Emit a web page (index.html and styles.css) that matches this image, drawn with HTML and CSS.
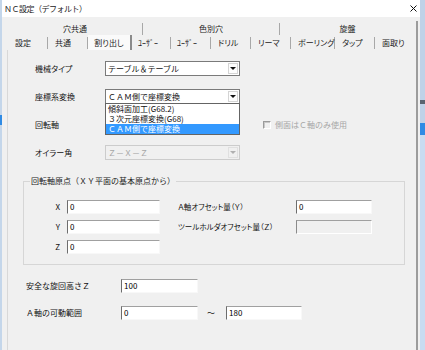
FILE: index.html
```html
<!DOCTYPE html>
<html lang="ja">
<head>
  <meta charset="UTF-8">
  <meta name="viewport" content="width=device-width, initial-scale=1.0">
  <title>ＮＣ設定（デフォルト）</title>
  <link rel="stylesheet" href="styles.css">
</head>
<body>
  <div class="screen">
    <div class="edge edgeLeft"></div>
    <div class="dialog">
      <div class="titlebar">
        <span class="title">ＮＣ設定（デフォルト）</span>
        <svg class="closeIcon" width="7" height="7" viewBox="0 0 7 7">
          <path d="M0.5 0.5L6.5 6.5M6.5 0.5L0.5 6.5" stroke="#111" stroke-width="1" fill="none"/>
        </svg>
      </div>
      <div class="client">
        <div class="tabControl">
          <div class="tabRow upperRow">
            <div class="tab group1">穴共通</div>
            <div class="tab group2">色別穴</div>
            <div class="tab group3 last">旋盤</div>
          </div>
          <div class="tabRow lowerRow">
            <div class="tab w40">設定</div>
            <div class="tab w40">共通</div>
            <div class="tab w44 selected">割り出し</div>
            <div class="tab w39 half">ﾕｰｻﾞｰ</div>
            <div class="tab w40 half">ﾕｰｻﾞｰ</div>
            <div class="tab w40">ドリル</div>
            <div class="tab w40">リーマ</div>
            <div class="tab w44">ボーリング</div>
            <div class="tab w40">タップ</div>
            <div class="tab w40 last">面取り</div>
          </div>

          <div class="panel">
            <div class="fields">
              <div class="row">
                <span class="label">機械タイプ</span>
                <div class="combo">
                  <span class="comboText">テーブル＆テーブル</span>
                  <span class="dropButton"><i class="arrow"></i></span>
                </div>
              </div>
              <div class="row">
                <span class="label">座標系変換</span>
                <div class="combo open">
                  <span class="comboText">ＣＡＭ側で座標変換</span>
                  <span class="dropButton"><i class="arrow"></i></span>
                  <ul class="dropList">
                    <li>傾斜面加工(G68.2)</li>
                    <li>３次元座標変換(G68)</li>
                    <li class="highlight">ＣＡＭ側で座標変換</li>
                  </ul>
                </div>
              </div>
              <div class="row">
                <span class="label">回転軸</span>
                <div class="combo">
                  <span class="comboText"></span>
                  <span class="dropButton"><i class="arrow"></i></span>
                </div>
                <label class="check disabled">
                  <span class="checkBox"></span>
                  <span>側面はＣ軸のみ使用</span>
                </label>
              </div>
              <div class="row">
                <span class="label">オイラー角</span>
                <div class="combo disabled">
                  <span class="comboText">Ｚ－Ｘ－Ｚ</span>
                  <span class="dropButton"><i class="arrow"></i></span>
                </div>
              </div>
            </div>

            <fieldset class="groupBox">
              <legend>回転軸原点（ＸＹ平面の基本原点から）</legend>
              <div class="originGrid">
                <span class="axis">X</span>
                <div class="edit w93">0</div>
                <span class="label2">Ａ軸オフセット量（Ｙ）</span>
                <div class="edit w76">0</div>

                <span class="axis">Y</span>
                <div class="edit w93">0</div>
                <span class="label2">ツールホルダオフセット量（Ｚ）</span>
                <div class="edit w76 disabled"></div>

                <span class="axis">Z</span>
                <div class="edit w93">0</div>
              </div>
            </fieldset>

            <div class="extraGrid">
              <span class="label">安全な旋回高さＺ</span>
              <div class="edit w77">100</div>
              <span></span>
              <span></span>

              <span class="label">Ａ軸の可動範囲</span>
              <div class="edit w77">0</div>
              <span class="tilde">～</span>
              <div class="edit w76">180</div>
            </div>
          </div>
        </div>
      </div>
    </div>
    <div class="edge edgeRight"></div>
  </div>
</body>
</html>
```

FILE: styles.css
```css
* {
  box-sizing: border-box;
}

html,
body {
  margin: 0;
  padding: 0;
}

body {
  font-family: "Noto Sans CJK JP", "Noto Sans", sans-serif;
  font-size: 8px;
  line-height: 10px;
  color: #111;
  background-color: #c8d9ec;
  overflow: hidden;
}

.screen {
  display: flex;
  width: 425px;
  height: 350px;
}

.edge {
  flex: none;
}

.edgeLeft {
  width: 2px;
  background: linear-gradient(#c4d6ea 0 115px, #2f8be4 115px 125px, #c4d6ea 125px);
}

.edgeRight {
  width: 5px;
  background: linear-gradient(#bfd2e8 0 100px, #5a6470 100px 104px, #bfd2e8 104px 123px, #2f8be4 123px 135px, #c8dcf1 135px);
}

.dialog {
  flex: 1;
  display: flex;
  flex-direction: column;
  background-color: #f0f0f0;
}

.titlebar {
  height: 17px;
  display: flex;
  align-items: center;
  justify-content: space-between;
  padding: 0 3px 0 2px;
  background-color: #fff;
}

.title {
  font-size: 8px;
  letter-spacing: -0.5px;
  color: #222;
}

.closeIcon {
  display: block;
}

.client {
  flex: 1;
  padding: 4px 0 0 5px;
}

/* tabs */

.tabControl {
  width: 411px;
  height: 100%;
  display: flex;
  flex-direction: column;
  border-right: 2px solid #9c9c9c;
}

.tabRow {
  display: flex;
  padding-left: 1px;
}

.upperRow {
  height: 15px;
}

.lowerRow {
  height: 14px;
}

.tab {
  border-right: 1px solid #a8a8a8;
  white-space: nowrap;
  color: #222;
  font-feature-settings: "palt";
}

.upperRow .tab {
  margin: 2px 0 1px;
  line-height: 12px;
  text-align: center;
}

.lowerRow .tab {
  margin: 1px 0 1px;
  line-height: 12px;
  padding-left: 7px;
}

.tab.last {
  border-right: none;
}

.group1 { width: 135px; }
.group2 { width: 137px; }
.group3 { width: 135px; }

.w39 { width: 39px; }
.w40 { width: 40px; }
.w44 { width: 44px; }

.lowerRow .tab.selected {
  margin: -1px 0 0;
  line-height: 15px;
  padding-left: 0;
  text-align: center;
  background-color: #fafafa;
  border-right: 2px solid #8a8a8a;
}

.lowerRow .tab.half {
  padding-left: 6px;
}

/* panel */

.panel {
  flex: 1;
  border-left: 1px solid #d8d8d8;
}

.fields {
  display: flex;
  flex-direction: column;
  gap: 13px;
  padding: 11px 0 0 27px;
}

.row {
  display: flex;
  align-items: center;
  height: 15px;
}

.row .label {
  width: 70px;
  font-feature-settings: "palt";
}

.combo {
  position: relative;
  width: 135px;
  height: 15px;
  display: flex;
  align-items: center;
  justify-content: space-between;
  border: 1px solid #7a7a7a;
  background-color: #fff;
}

.comboText {
  padding-left: 2px;
  white-space: nowrap;
}

.dropButton {
  width: 10px;
  height: 11px;
  margin-right: 1px;
  display: flex;
  align-items: center;
  justify-content: center;
  border: 1px solid #d4d4d4;
  background-color: #fdfdfd;
}

.arrow {
  width: 0;
  height: 0;
  border-left: 3px solid transparent;
  border-right: 3px solid transparent;
  border-top: 3px solid #111;
}

.combo.disabled {
  border-color: #cccccc;
  background-color: #f0f0f0;
  color: #a6a6a6;
}

.combo.disabled .dropButton {
  border-color: #e0e0e0;
  background-color: #f0f0f0;
}

.combo.disabled .arrow {
  border-top-color: #b0b0b0;
}

.dropList {
  position: absolute;
  top: 100%;
  left: -1px;
  width: 135px;
  margin: 0;
  padding: 0;
  list-style: none;
  border: 1px solid #646464;
  background-color: #fff;
  z-index: 2;
}

.dropList li {
  height: 10px;
  line-height: 10px;
  padding-left: 2px;
  white-space: nowrap;
}

.dropList li.highlight {
  background-color: #3399ff;
  color: #fff;
}

.check {
  display: flex;
  align-items: center;
  margin-left: 23px;
  gap: 4px;
}

.check.disabled {
  color: #a6a6a6;
}

.checkBox {
  width: 8px;
  height: 8px;
  border: 1px solid;
  border-color: #9a9a9a #ffffff #ffffff #9a9a9a;
  box-shadow: inset 1px 1px 0 #c8c8c8;
  background-color: #f0f0f0;
}

/* group box */

.groupBox {
  width: 382px;
  margin: 16px 0 0 15px;
  padding: 0 0 10px 6px;
  border: 1px solid #d6d6d6;
  min-width: 0;
}

.groupBox legend {
  padding: 0 1px;
  line-height: 10px;
  color: #222;
}

.originGrid {
  display: grid;
  grid-template-columns: 37px 93px 136px 76px;
  grid-auto-rows: 14px;
  row-gap: 6px;
  align-items: center;
  margin-top: 14px;
}

.axis {
  text-align: right;
  padding-right: 7px;
}

.label2 {
  padding-left: 18px;
  white-space: nowrap;
  font-size: 7.5px;
  font-feature-settings: "palt";
}

.edit {
  height: 14px;
  line-height: 12px;
  padding-left: 2px;
  border: 1px solid;
  border-color: #a0a0a0 #f8f8f8 #f8f8f8 #6d6d6d;
  background-color: #fff;
  color: #000;
}

.edit.disabled {
  background-color: #f0f0f0;
  border-color: #a0a0a0 #ffffff #ffffff #8a8a8a;
}

.w93 { width: 93px; }
.w77 { width: 77px; }
.w76 { width: 76px; }

/* bottom rows */

.extraGrid {
  display: grid;
  grid-template-columns: 95px 77px 28px 76px;
  grid-auto-rows: 14px;
  row-gap: 13px;
  align-items: center;
  margin-top: 14px;
  padding-left: 18px;
}

.extraGrid .label {
  font-feature-settings: normal;
}

.tilde {
  text-align: center;
  padding-right: 2px;
}
```
